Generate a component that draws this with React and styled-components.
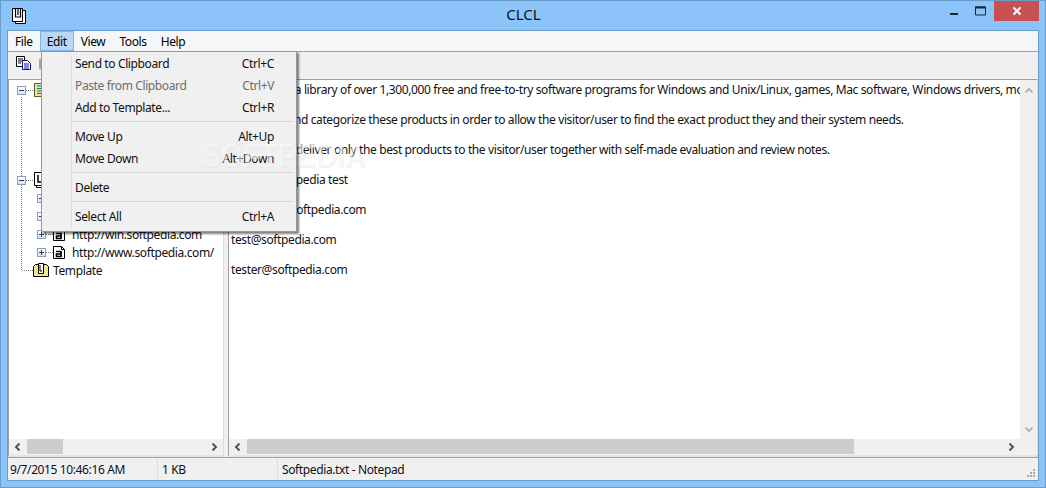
import React from "react";
import styled, { createGlobalStyle } from "styled-components";

const Global = createGlobalStyle`
  html, body { margin: 0; padding: 0; background: #8ac4fb; }
  * { box-sizing: border-box; }
`;

const Win = styled.div`
  width: 1046px;
  height: 488px;
  position: relative;
  overflow: hidden;
  display: flex;
  flex-direction: column;
  background: #8ac4fb;
  border: 1px solid #6c9cc8;
  font-family: "Noto Sans", "Open Sans", sans-serif;
  font-size: 12px;
  letter-spacing: -0.38px;
  color: #000;
`;

const TitleBar = styled.div`
  height: 29px;
  flex: none;
  display: flex;
  align-items: flex-start;
`;

const AppIcon = styled.svg`
  width: 16px;
  height: 18px;
  margin: 6px 0 0 10px;
`;

const TitleText = styled.div`
  flex: 1;
  text-align: center;
  font-size: 15px;
  letter-spacing: 0;
  line-height: 27px;
  padding-left: 80px;
  color: #111;
`;

const WinBtns = styled.div`
  display: flex;
  align-items: flex-start;
  margin-right: 6px;
`;

const WinBtn = styled.div`
  width: ${p => p.w}px;
  height: 20px;
  display: flex;
  align-items: center;
  justify-content: center;
  background: ${p => p.close ? "#c75050" : "transparent"};
`;

const Client = styled.div`
  flex: 1;
  margin: 0 6px 6px 6px;
  display: flex;
  flex-direction: column;
  background: #f0f0f0;
  border: 1px solid #6c9cc8;
  min-height: 0;
`;

const MenuBar = styled.div`
  height: 21px;
  flex: none;
  display: flex;
  background: #f5f6f7;
  border-bottom: 1px solid #a0a0a0;
`;

const MenuItem = styled.div`
  height: 20px;
  line-height: 20px;
  padding: 0 6px;
  border: 1px solid ${p => p.open ? "#7eb4ea" : "transparent"};
  background: ${p => p.open ? "#b8d6f6" : "transparent"};
`;

const ToolBar = styled.div`
  height: 27px;
  flex: none;
  display: flex;
  align-items: flex-start;
  gap: 7px;
  padding: 4px 0 0 8px;
  background: #f0f0f0;
`;

const ToolSep = styled.span`
  width: 2px;
  height: 10px;
  margin-top: 3px;
  background: #a8a8a8;
`;

const Panes = styled.div`
  flex: 1;
  display: flex;
  gap: 4px;
  min-height: 0;
`;

const Pane = styled.div`
  background: #fff;
  border: 1px solid #a0a0a0;
  border-right-color: #dcdcdc;
  border-bottom: 2px solid #e4e4e4;
  width: ${p => p.w}px;
  flex: ${p => p.w ? "none" : 1};
  display: flex;
  flex-direction: column;
  min-width: 0;
  overflow: hidden;
`;

const PaneBody = styled.div`
  flex: 1;
  display: flex;
  min-height: 0;
`;

const Tree = styled.div`
  flex: 1;
  padding-top: 1px;
  position: relative;
  white-space: nowrap;
`;

const TreeRow = styled.div`
  height: 18px;
  display: flex;
  align-items: center;
  padding-left: ${p => p.indent}px;
`;

const Expander = styled.span`
  width: 9px;
  height: 9px;
  flex: none;
  border: 1px solid #8f9db0;
  background: linear-gradient(#fff, #dde3ea);
  position: relative;
  &::before {
    content: "";
    position: absolute;
    left: 1px;
    right: 1px;
    top: 3px;
    height: 1px;
    background: #1d3f77;
  }
  &::after {
    content: "";
    display: ${p => p.plus ? "block" : "none"};
    position: absolute;
    top: 1px;
    bottom: 1px;
    left: 3px;
    width: 1px;
    background: #1d3f77;
  }
`;

const Dash = styled.span`
  width: ${p => p.w || 7}px;
  flex: none;
  border-top: 1px dotted #808080;
`;

const VLine = styled.span`
  position: absolute;
  left: 12px;
  top: 17px;
  height: 173px;
  border-left: 1px dotted #808080;
`;

const RowIcon = styled.svg`
  width: 16px;
  height: 16px;
  flex: none;
`;

const RowLabel = styled.span`
  margin-left: ${p => p.gap || 3}px;
  color: #111;
`;

const TextArea = styled.div`
  flex: 1;
  overflow: hidden;
  white-space: nowrap;
  padding: 1px 0 0 2px;
  color: #111;
  min-width: 0;
`;

const TextLine = styled.div`
  height: 30px;
  line-height: 18px;
`;

const ScrollH = styled.div`
  height: 16px;
  flex: none;
  display: flex;
  align-items: center;
  background: #f0f0f0;
`;

const ScrollV = styled.div`
  width: 17px;
  flex: none;
  display: flex;
  flex-direction: column;
  align-items: center;
  justify-content: space-between;
  padding: 6px 0 5px;
  background: #f0f0f0;
`;

const ScrollCorner = styled.span`
  width: 17px;
  flex: none;
`;

const ArrowBtn = styled.span`
  width: 18px;
  flex: none;
  display: flex;
  align-items: center;
  justify-content: center;
`;

const Track = styled.div`
  flex: 1;
  height: 16px;
`;

const Thumb = styled.div`
  width: ${p => p.w}px;
  height: 15px;
  background: #cdcdcd;
`;

const StatusBar = styled.div`
  height: 23px;
  flex: none;
  display: flex;
  align-items: center;
  position: relative;
  border-top: 1px solid #a0a0a0;
  background: #f0f0f0;
`;

const StatusCell = styled.div`
  width: ${p => p.w}px;
  flex: ${p => p.w ? "none" : 1};
  height: 20px;
  line-height: 20px;
  padding: 1px 0 0 ${p => p.first ? 2 : 4}px;
  border-right: ${p => p.w ? "1px solid #dcdcdc" : "none"};
  color: #111;
`;

const Grip = styled.svg`
  position: absolute;
  right: 2px;
  bottom: 2px;
  width: 10px;
  height: 10px;
`;

const PopMenu = styled.div`
  position: absolute;
  left: 40px;
  top: 50px;
  width: 256px;
  height: 181px;
  padding: 0 2px;
  background: #f0f0f0;
  border: 1px solid #979797;
  box-shadow: 2px 2px 2px rgba(0, 0, 0, 0.5);
  z-index: 2;
  &::before {
    content: "";
    position: absolute;
    left: 29px;
    top: 2px;
    bottom: 2px;
    width: 1px;
    background: #e0e0e0;
  }
`;

const PopItem = styled.div`
  height: 22px;
  display: flex;
  align-items: center;
  justify-content: space-between;
  padding: 0 20px 0 31px;
  color: ${p => p.off ? "#6d6d6d" : "#111"};
`;

const PopSep = styled.div`
  height: 1px;
  margin: 3px 1px 3px 28px;
  background: #d7d7d7;
`;

const Watermark = styled.div`
  position: absolute;
  left: 201px;
  top: 135px;
  font-family: "Liberation Sans", sans-serif;
  font-size: 34px;
  font-weight: 700;
  letter-spacing: 0;
  transform: scaleX(0.84);
  transform-origin: left top;
  color: rgba(255, 255, 255, 0.5);
  text-shadow: 1px 1px 1px rgba(190, 190, 190, 0.25);
  z-index: 3;
  pointer-events: none;
`;

const DocIcon = () => (
  <RowIcon viewBox="0 0 16 16">
    <path d="M.5 2.5h8l3 3v9H.5z" fill="#fff" stroke="#000" />
    <path d="M8.5 2.5v3h3" fill="none" stroke="#000" />
    <path d="M3 7.5h5v5H3.5v-2.5H8" fill="none" stroke="#000" strokeWidth="1.7" />
  </RowIcon>
);

const Chevron = ({ dir, color = "#555" }) => {
  const paths = {
    left: "M6.5 1.5L3 5l3.5 3.5",
    right: "M3.5 1.5L7 5 3.5 8.5",
    up: "M1.5 6.5L5 3l3.5 3.5",
    down: "M1.5 3.5L5 7l3.5-3.5"
  };
  return (
    <svg width="10" height="10" viewBox="0 0 10 10">
      <path d={paths[dir]} fill="none" stroke={color} strokeWidth="2" />
    </svg>
  );
};

const rows = [
  "Softpedia is a library of over 1,300,000 free and free-to-try software programs for Windows and Unix/Linux, games, Mac software, Windows drivers, mobile devices and IT-related articles.",
  "We review and categorize these products in order to allow the visitor/user to find the exact product they and their system needs.",
  "We strive to deliver only the best products to the visitor/user together with self-made evaluation and review notes.",
  "This is a Softpedia test",
  "softpedia@softpedia.com",
  "test@softpedia.com",
  "tester@softpedia.com"
];

const App = () => (
  <Win>
    <Global />
    <TitleBar>
      <AppIcon viewBox="0 0 16 18">
        <path d="M4.5 3.5h10v13h-10z" fill="#fff" stroke="#000" />
        <path d="M1.5 1.5h10v13h-10z" fill="#fff" stroke="#000" />
        <path d="M4.5 1v9h5V1M7 1v7" fill="none" stroke="#000" strokeWidth="1.2" />
      </AppIcon>
      <TitleText>CLCL</TitleText>
      <WinBtns>
        <WinBtn w={27}>
          <svg width="10" height="10" viewBox="0 0 10 10"><path d="M1 8h8" stroke="#222" strokeWidth="2" /></svg>
        </WinBtn>
        <WinBtn w={27}>
          <svg width="11" height="10" viewBox="0 0 11 10"><path d="M.5 1h10v8H.5z" fill="none" stroke="#222" /><path d="M0 1.5h11" stroke="#222" strokeWidth="2" /></svg>
        </WinBtn>
        <WinBtn w={45} close>
          <svg width="10" height="10" viewBox="0 0 10 10"><path d="M1.5 1.5l7 7M8.5 1.5l-7 7" stroke="#fff" strokeWidth="2" /></svg>
        </WinBtn>
      </WinBtns>
    </TitleBar>
    <Client>
      <MenuBar>
        <MenuItem>File</MenuItem>
        <MenuItem open>Edit</MenuItem>
        <MenuItem>View</MenuItem>
        <MenuItem>Tools</MenuItem>
        <MenuItem>Help</MenuItem>
      </MenuBar>
      <ToolBar>
        <svg width="16" height="14" viewBox="0 0 16 14">
          <path d="M.5.5h8v10h-8z" fill="#fff" stroke="#000" />
          <path d="M2 3h5M2 5h5M2 7h3" stroke="#000" />
          <path d="M6.5 4.5h5l3 3v6h-8z" fill="#fff" stroke="#14148c" />
          <path d="M8 8h5M8 10h5M8 12h5" stroke="#14148c" />
        </svg>
        <ToolSep />
      </ToolBar>
      <Panes>
        <Pane w={216}>
          <PaneBody>
            <Tree>
              <VLine />
              <TreeRow indent={8}>
                <Expander />
                <Dash />
                <RowIcon viewBox="0 0 16 16">
                  <path d="M1.5 1.5h13v13h-13z" fill="#e8e4b0" stroke="#5a5a20" />
                  <path d="M4 4h9M4 6.5h9M4 9h9M4 11.5h9" stroke="#1a7a6a" />
                </RowIcon>
              </TreeRow>
              <TreeRow />
              <TreeRow />
              <TreeRow />
              <TreeRow />
              <TreeRow indent={8}>
                <Expander />
                <Dash />
                <RowIcon viewBox="0 0 16 16">
                  <path d="M3.5 2.5h11v13h-11z" fill="#fff" stroke="#000" />
                  <path d="M1.5.5h11v13h-11z" fill="#fff" stroke="#000" />
                  <path d="M5 3v7h5" fill="none" stroke="#000" strokeWidth="1.5" />
                </RowIcon>
              </TreeRow>
              <TreeRow indent={28}><Expander /></TreeRow>
              <TreeRow indent={28}><Expander /></TreeRow>
              <TreeRow indent={28}><Expander plus /><Dash /><DocIcon /><RowLabel>http://win.softpedia.com</RowLabel></TreeRow>
              <TreeRow indent={28}><Expander plus /><Dash /><DocIcon /><RowLabel>http://www.softpedia.com/</RowLabel></TreeRow>
              <TreeRow indent={13}>
                <Dash w={11} />
                <RowIcon viewBox="0 0 16 16">
                  <defs>
                    <pattern id="dither" width="2" height="2" patternUnits="userSpaceOnUse">
                      <rect width="2" height="2" fill="#fff9a0" />
                      <rect width="1" height="1" fill="#f2e000" />
                      <rect x="1" y="1" width="1" height="1" fill="#f2e000" />
                    </pattern>
                  </defs>
                  <path d="M.5 4.5l2-2h11l2 2v10H.5z" fill="url(#dither)" stroke="#000" />
                  <path d="M5.5 1.5h5v10h-5z" fill="#fff" stroke="#000" />
                  <path d="M7 3v6h2" fill="none" stroke="#000" />
                </RowIcon>
                <RowLabel gap={4}>Template</RowLabel>
              </TreeRow>
            </Tree>
          </PaneBody>
          <ScrollH>
            <ArrowBtn><Chevron dir="left" /></ArrowBtn>
            <Track><Thumb w={36} /></Track>
            <ArrowBtn><Chevron dir="right" /></ArrowBtn>
          </ScrollH>
        </Pane>
        <Pane>
          <PaneBody>
            <TextArea>
              {rows.map((r, i) => <TextLine key={i}>{r}</TextLine>)}
            </TextArea>
            <ScrollV>
              <Chevron dir="up" color="#b5b5b5" />
              <Chevron dir="down" color="#b5b5b5" />
            </ScrollV>
          </PaneBody>
          <ScrollH>
            <ArrowBtn><Chevron dir="left" /></ArrowBtn>
            <Track><Thumb w={607} /></Track>
            <ArrowBtn><Chevron dir="right" /></ArrowBtn>
            <ScrollCorner />
          </ScrollH>
        </Pane>
      </Panes>
      <StatusBar>
        <StatusCell first w={150}>9/7/2015 10:46:16 AM</StatusCell>
        <StatusCell w={120}>1 KB</StatusCell>
        <StatusCell>Softpedia.txt - Notepad</StatusCell>
        <Grip viewBox="0 0 10 10">
          <path d="M7 1h2v2H7zM4 4h2v2H4zM7 4h2v2H7zM1 7h2v2H1zM4 7h2v2H4zM7 7h2v2H7z" fill="#a8a8a8" />
        </Grip>
      </StatusBar>
    </Client>
    <PopMenu>
      <PopItem><span>Send to Clipboard</span><span>Ctrl+C</span></PopItem>
      <PopItem off><span>Paste from Clipboard</span><span>Ctrl+V</span></PopItem>
      <PopItem><span>Add to Template...</span><span>Ctrl+R</span></PopItem>
      <PopSep />
      <PopItem><span>Move Up</span><span>Alt+Up</span></PopItem>
      <PopItem><span>Move Down</span><span>Alt+Down</span></PopItem>
      <PopSep />
      <PopItem><span>Delete</span></PopItem>
      <PopSep />
      <PopItem><span>Select All</span><span>Ctrl+A</span></PopItem>
    </PopMenu>
    <Watermark>SOFTPEDIA</Watermark>
  </Win>
);

export default App;
